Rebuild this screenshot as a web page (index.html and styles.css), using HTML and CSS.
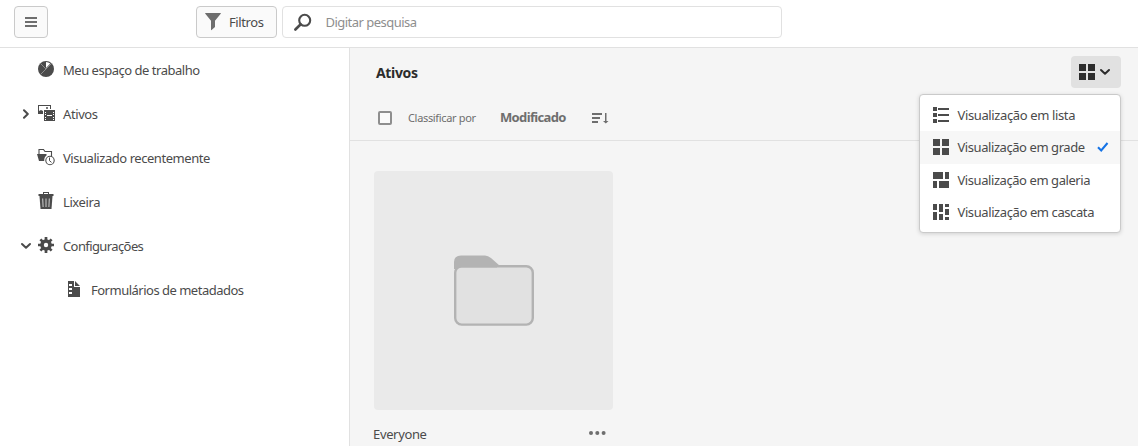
FILE: index.html
```html
<!DOCTYPE html>
<html lang="pt-BR">
<head>
<meta charset="utf-8">
<title>Ativos</title>
<link rel="stylesheet" href="styles.css">
</head>
<body>
<div class="app">
  <header class="topbar">
    <button class="btn menu-btn" aria-label="Menu"><svg width="12" height="10"><path d="M0 0h12v2H0zM0 4h12v2H0zM0 8h12v2H0z"/></svg></button>
    <button class="btn filter-btn"><svg width="16" height="18" viewBox="0 0 16 18"><path d="M.5 0h15q.7 0 .2.7L10 7.8V14l-3.4 3q-.6.4-.6-.4V7.8L.3.7Q-.2 0 .5 0z"/></svg><span class="t-filtros">Filtros</span></button>
    <div class="search"><svg width="18" height="18" viewBox="0 0 18 18"><circle cx="10.7" cy="7.3" r="5.500" fill="none" stroke="#4b4b4b" stroke-width="2.100"/><path d="M6.700 11.300 1.400 16.500" stroke="#4b4b4b" stroke-width="2.600" stroke-linecap="round"/></svg><span class="t-search">Digitar pesquisa</span></div>
  </header>
  <div class="body">
    <nav class="side">
      <a class="row"><i class="chev"></i><svg width="18" height="18" viewBox="0 0 18 18"><circle cx="9" cy="9" r="8"/><path d="M9 8V2A7 7 0 0 1 13.3 3.6z" fill="#fff"/><path d="M9 9 3.3 3.3M9 9l-5.7 5.7M9 9l5.8-5.8" stroke="#aaa" stroke-width=".7"/></svg><span class="t-meu">Meu espaço de trabalho</span></a>
      <a class="row"><i class="chev"><svg width="8" height="10"><path d="M2 1.200 5.800 5 2 8.800" class="line"/></svg></i><svg width="18" height="18" viewBox="0 0 18 18"><path d="M1 1h13v4h-1V2H2v5l2-1 2 1v3H1z"/><circle cx="10" cy="4" r="1"/><path fill-rule="evenodd" d="M7 6h11v11H7zM8 8v1h1V8zm0 2v1h1v-1zm0 3v1h1v-1zm0 2v1h1v-1zM16 8v1h1V8zm0 2v1h1v-1zm0 3v1h1v-1zm0 2v1h1v-1zM10 11v1h5v-1z"/></svg><span class="t-ativos">Ativos</span></a>
      <a class="row"><i class="chev"></i><svg width="18" height="18" viewBox="0 0 18 18"><path d="M2 6V1.500h4.500l1.500 2h6.500V8" fill="none" stroke="#4b4b4b" stroke-width="1.100"/><path d="M0 6h9.500v1.500Q7 9 7.200 13H2z"/><circle cx="13" cy="12.500" r="4.200" fill="#fff" stroke="#4b4b4b" stroke-width="1.100"/><path d="M12.500 9.500v3.200l2 1.700" fill="none" stroke="#4b4b4b"/></svg><span class="t-vis">Visualizado recentemente</span></a>
      <a class="row"><i class="chev"></i><svg class="trash" width="18" height="18" viewBox="0 0 18 18"><path fill-rule="evenodd" d="M6 0h6v2h4.500v2h-15V2H6zm1 1v1h4V1z"/><path d="M2.500 4h13l-1 13h-11z"/><path d="m5.700 6.500.4 8.500M9 6.500V15M12.300 6.500l-.4 8.500" stroke="#ddd" stroke-width=".9"/></svg><span class="t-lix">Lixeira</span></a>
      <a class="row"><i class="chev"><svg width="12" height="8"><path d="M2 2 6 5.800 10 2" class="line"/></svg></i><svg width="18" height="18" viewBox="0 0 18 18"><path d="M9 1v16M1 9h16M3.400 3.400l11.200 11.200M3.400 14.600 14.600 3.400" stroke="#4b4b4b" stroke-width="2.700"/><circle cx="9" cy="9" r="5.800"/><circle cx="9" cy="9" r="2.200" fill="#fff"/></svg><span class="t-conf">Configurações</span></a>
      <a class="row sub"><svg width="18" height="18" viewBox="0 0 18 18"><path d="M3 1h6v6h6v10H3zM10 1l5 5h-5z"/><path d="M4 4h3v2H4zM4 8h3v2H4zM4 12h3v2H4z" fill="#fff"/></svg><span class="t-form">Formulários de metadados</span></a>
    </nav>
    <main class="main">
      <div class="head"><h1 class="t-title">Ativos</h1>
        <button class="view-btn" aria-label="Visualização"><svg width="16" height="16"><path d="M0 0h7v7H0zM9 0h7v7H9zM0 9h7v7H0zM9 9h7v7H9z"/></svg><svg width="12" height="8"><path d="M2 2 6 5.800 10 2" class="line"/></svg></button>
      </div>
      <div class="sortbar"><i class="check"></i><span class="t-class">Classificar por</span><b class="t-mod">Modificado</b><svg width="17" height="12" viewBox="0 0 17 12"><path d="M0 1h10v2H0zM0 5h8v2H0zM0 9h6v2H0zM13 1h1.500v8H16.500l-2.700 2.500L11 9h2z"/></svg></div>
      <div class="content"><article class="card">
        <div class="thumb"><svg width="80" height="71" viewBox="0 0 80 71"><path d="M0 14V7Q0 .5 7 .5H31Q34 .5 37 3L46 11V14z" fill="#b3b3b3"/><rect x="1.200" y="11.200" width="77.600" height="58.400" rx="6.500" fill="#e1e1e1" stroke="#b3b3b3" stroke-width="2.400"/><path d="M0 9h43v3.400H0z" fill="#b3b3b3"/></svg></div>
        <div class="caption"><span class="t-every">Everyone</span><svg width="17" height="4"><circle cx="2" cy="2" r="2"/><circle cx="8.300" cy="2" r="2"/><circle cx="14.600" cy="2" r="2"/></svg></div>
      </article></div>
    </main>
  </div>
  <div class="popover">
    <div class="item"><svg width="16" height="16"><path d="M0 0h4v4H0zM0 6h4v4H0zM0 12h4v4H0zM5 1h11v2H5zM5 7h11v2H5zM5 13h11v2H5z"/></svg><span class="t-lista">Visualização em lista</span></div>
    <div class="item selected"><svg width="16" height="16"><path d="M0 0h7v7H0zM9 0h7v7H9zM0 9h7v7H0zM9 9h7v7H9z"/></svg><span class="t-grade">Visualização em grade</span><svg class="tick" width="12" height="10"><path d="M1 5.200 4.200 8.500 10.500 1" fill="none" stroke="#1473e6" stroke-width="2"/></svg></div>
    <div class="item"><svg width="16" height="16"><path d="M0 0h10v7H0zM12 0h4v7h-4zM0 9h4v7H0zM6 9h10v7H6z"/></svg><span class="t-gal">Visualização em galeria</span></div>
    <div class="item"><svg width="16" height="16"><path d="M0 0h4v6H0zM0 8h4v8H0zM6 0h4v8H6zM6 10h4v6H6zM12 0h4v3h-4zM12 5h4v6h-4zM12 13h4v3h-4z"/></svg><span class="t-casc">Visualização em cascata</span></div>
  </div>
</div>
</body>
</html>
```
FILE: styles.css
```css
* { box-sizing: border-box; }
body { margin: 0; background: #fff; color: #4b4b4b; font: 13px/18px "Noto Sans", sans-serif; }
svg { display: block; flex: none; fill: #4b4b4b; }
span, b, h1 { white-space: nowrap; }
button { font: inherit; color: inherit; margin: 0; }
.line { fill: none; stroke: #4b4b4b; stroke-width: 2; stroke-linecap: round; stroke-linejoin: round; }
.app { position: relative; width: 1138px; height: 446px; overflow: hidden; display: flex; flex-direction: column; }
.topbar { height: 48px; flex: none; border-bottom: 1px solid #e1e1e1; padding: 6px 14px; display: flex; }
.btn { height: 32px; border: 1px solid #cacaca; border-radius: 4px; background: #fafafa; padding: 0; display: flex; align-items: center; }
.btn svg { fill: #6e6e6e; }
.menu-btn { width: 34px; justify-content: center; }
.filter-btn { width: 81px; margin-left: 148px; padding-left: 8px; gap: 8px; }
.search { width: 500px; height: 32px; margin-left: 5px; border: 1px solid #e1e1e1; border-radius: 4px; display: flex; align-items: center; padding-left: 11px; gap: 13px; color: #8e8e8e; }
.body { flex: 1; display: flex; min-height: 0; }
.side { width: 350px; border-right: 1px solid #e1e1e1; }
.row { height: 44px; padding-left: 19px; display: flex; align-items: center; }
.row > svg { margin: 0 8px 2px 5px; }
.chev { width: 13px; display: flex; justify-content: center; }
.row.sub { padding-left: 60px; }
.sub > svg { margin-right: 8px; }
.main { flex: 1; background: #f5f5f5; }
.head { height: 48px; display: flex; justify-content: space-between; align-items: center; padding: 0 17px 0 26px; }
h1 { margin: 0; padding-top: 1px; font-size: 14px; line-height: 18px; color: #2c2c2c; }
.view-btn { width: 50px; height: 32px; border: 0; border-radius: 4px; background: #e1e1e1; padding: 0 0 0 8px; display: flex; align-items: center; gap: 4px; }
.view-btn svg { fill: #2c2c2c; }
.view-btn .line { stroke: #2c2c2c; }
.sortbar { height: 45px; border-bottom: 1px solid #e1e1e1; padding-left: 28px; display: flex; align-items: center; color: #6e6e6e; }
.sortbar svg { fill: #6e6e6e; margin-left: 26px; }
.check { width: 14px; height: 14px; border: 2px solid #8e8e8e; border-radius: 2px; background: #fafafa; margin-right: 16px; }
.content { padding: 30px 24px; }
.card { width: 239px; }
.thumb { height: 239px; border-radius: 4px; background: #eaeaea; display: flex; align-items: center; justify-content: center; }
.caption { margin-top: 15px; display: flex; align-items: center; justify-content: space-between; padding-right: 7px; }
.caption svg { fill: #6e6e6e; margin-bottom: 2px; }
.popover { position: absolute; left: 919px; top: 94px; width: 202px; height: 139px; padding: 3.6px 0; background: #fff; border: 1px solid #cacaca; border-radius: 4px; box-shadow: 0 1px 4px rgba(0,0,0,.15); }
.item { height: 32.500px; padding: 0 11px 0 13px; display: flex; align-items: center; gap: 8.500px; }
.selected { background: #f7f7f7; }
.tick { margin-left: auto; }
.t-filtros, .t-ativos, .t-lix { letter-spacing: -.4px; }
.t-search { margin-left: .5px; letter-spacing: -.52px; }
.t-every { margin-left: -1px; letter-spacing: -.35px; }
.t-meu { letter-spacing: -.48px; }
.t-form { letter-spacing: -.5px; }
.t-vis { letter-spacing: -.45px; }
.t-conf { letter-spacing: -.6px; }
.t-lista { letter-spacing: -.37px; }
.t-grade, .t-gal { letter-spacing: -.43px; }
.t-casc { letter-spacing: -.4px; }
.t-class { font-size: 11px; width: 92px; letter-spacing: -.33px; }
.t-mod { padding-bottom: 2px; letter-spacing: -.65px; }
.t-title { letter-spacing: -.35px; }
```
